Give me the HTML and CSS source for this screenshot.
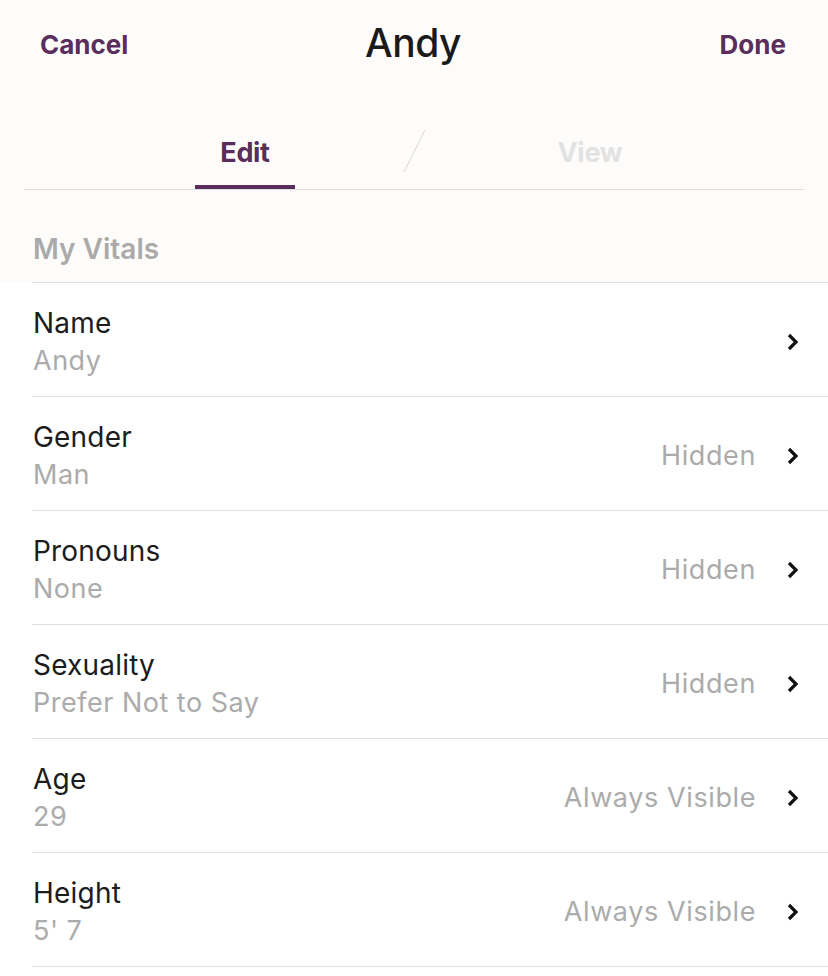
FILE: index.html
```html
<!DOCTYPE html>
<html>
<head>
    <title>Edit Profile</title>
    <link rel="stylesheet" href="styles.css">
</head>
<body>
    <div class="header">
        <div class="topbar">
            <span class="nav-btn">Cancel</span>
            <span class="title">Andy</span>
            <span class="nav-btn done">Done</span>
        </div>

        <div class="tabs">
            <div class="tab active">Edit</div>
            <svg class="slash" width="24" height="44" viewBox="0 0 24 44">
                <line x1="22" y1="1" x2="1" y2="43" stroke="#d8d8d8" stroke-width="1"/>
            </svg>
            <div class="tab">View</div>
        </div>

        <div class="section-title">My Vitals</div>
    </div>

    <div class="list">
        <div class="row">
            <div class="info">
                <div class="label">Name</div>
                <div class="value">Andy</div>
            </div>
            <div class="right">
                <svg class="chevron" width="14" height="20" viewBox="0 0 14 20"><polyline points="3,3 10,10 3,17" fill="none" stroke="#111" stroke-width="3.2"/></svg>
            </div>
        </div>
        <div class="row">
            <div class="info">
                <div class="label">Gender</div>
                <div class="value">Man</div>
            </div>
            <div class="right">
                <span class="status">Hidden</span>
                <svg class="chevron" width="14" height="20" viewBox="0 0 14 20"><polyline points="3,3 10,10 3,17" fill="none" stroke="#111" stroke-width="3.2"/></svg>
            </div>
        </div>
        <div class="row">
            <div class="info">
                <div class="label">Pronouns</div>
                <div class="value">None</div>
            </div>
            <div class="right">
                <span class="status">Hidden</span>
                <svg class="chevron" width="14" height="20" viewBox="0 0 14 20"><polyline points="3,3 10,10 3,17" fill="none" stroke="#111" stroke-width="3.2"/></svg>
            </div>
        </div>
        <div class="row">
            <div class="info">
                <div class="label">Sexuality</div>
                <div class="value">Prefer Not to Say</div>
            </div>
            <div class="right">
                <span class="status">Hidden</span>
                <svg class="chevron" width="14" height="20" viewBox="0 0 14 20"><polyline points="3,3 10,10 3,17" fill="none" stroke="#111" stroke-width="3.2"/></svg>
            </div>
        </div>
        <div class="row">
            <div class="info">
                <div class="label">Age</div>
                <div class="value">29</div>
            </div>
            <div class="right">
                <span class="status">Always Visible</span>
                <svg class="chevron" width="14" height="20" viewBox="0 0 14 20"><polyline points="3,3 10,10 3,17" fill="none" stroke="#111" stroke-width="3.2"/></svg>
            </div>
        </div>
        <div class="row">
            <div class="info">
                <div class="label">Height</div>
                <div class="value">5' 7</div>
            </div>
            <div class="right">
                <span class="status">Always Visible</span>
                <svg class="chevron" width="14" height="20" viewBox="0 0 14 20"><polyline points="3,3 10,10 3,17" fill="none" stroke="#111" stroke-width="3.2"/></svg>
            </div>
        </div>
    </div>
</body>
</html>
```

FILE: styles.css
```css
body { margin: 0; background: #fff; font-family: Inter, "Noto Sans", sans-serif; color: #1c1c1c; }

.header { background: #fdfcfa; height: 282px; }

.topbar { display: grid; grid-template-columns: 1fr auto 1fr; align-items: center; height: 84px; padding: 0 42px 0 40px; }
.nav-btn { font-size: 26px; font-weight: 700; color: #5a2d5c; padding-top: 4px; }
.nav-btn.done { justify-self: end; }
.title { font-size: 39px; font-weight: 500; color: #1a1a1a; letter-spacing: -0.5px; }

.tabs { display: flex; align-items: center; margin: 36px 24px 0; height: 69px; border-bottom: 1px solid #dedede; }
.tab { width: 100px; height: 65px; display: flex; align-items: center; justify-content: center; font-size: 27px; font-weight: 700; color: #e2e2e2; border-bottom: 4px solid transparent; letter-spacing: -0.3px; }
.tab.active { margin-left: 171px; color: #5a2d5c; border-bottom-color: #5a2d5c; }
.slash { margin: 0 113px 8px 108px; }

.section-title { padding: 42px 0 0 33px; font-size: 28px; font-weight: 600; color: #aaaaaa; }

.list { margin-left: 32px; border-top: 1px solid #dedede; }
.row { display: flex; align-items: center; justify-content: space-between; height: 113px; border-bottom: 1px solid #dedede; padding-left: 1px; }
.info { padding-top: 4px; }
.label { font-size: 28px; line-height: 37px; color: #1c1c1c; letter-spacing: 0.2px; }
.value { font-size: 27px; line-height: 37px; color: #ababab; letter-spacing: 0.5px; }
.right { display: flex; align-items: center; padding: 4px 28px 0 0; }
.status { font-size: 27px; color: #ababab; margin-right: 30px; letter-spacing: 0.6px; }
.chevron { display: block; }
```
